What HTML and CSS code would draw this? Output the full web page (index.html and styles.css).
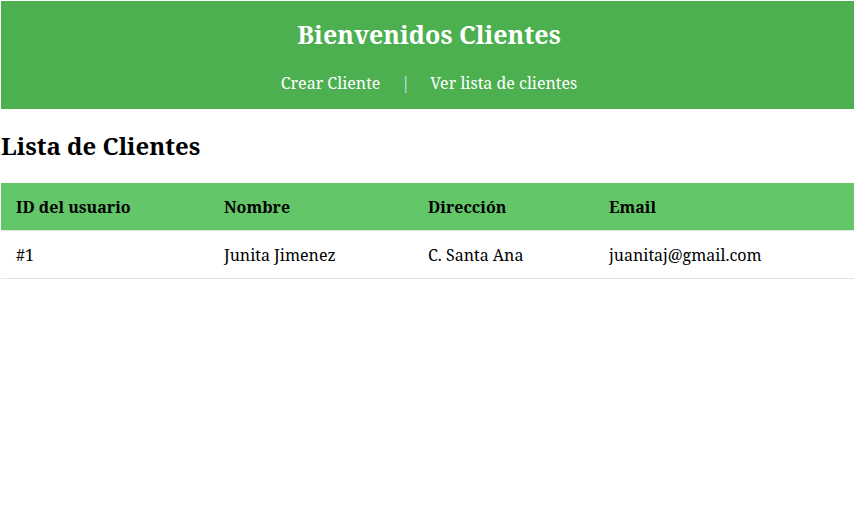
FILE: index.html
```html
<!DOCTYPE html>
<html lang="es">
<head>
<meta charset="utf-8">
<title>Clientes</title>
<link rel="stylesheet" href="styles.css">
</head>
<body>
<header class="site-header">
  <h1 class="site-title">Bienvenidos Clientes</h1>
  <nav class="site-nav">
    <a href="#" class="nav-link">Crear Cliente</a>
    <span class="nav-sep">|</span>
    <a href="#" class="nav-link">Ver lista de clientes</a>
  </nav>
</header>
<main>
  <h2 class="page-title">Lista de Clientes</h2>
  <table class="clients">
    <colgroup>
      <col class="col-id">
      <col class="col-name">
      <col class="col-addr">
      <col class="col-email">
    </colgroup>
    <thead>
      <tr>
        <th>ID del usuario</th>
        <th>Nombre</th>
        <th>Dirección</th>
        <th>Email</th>
      </tr>
    </thead>
    <tbody>
      <tr>
        <td>#1</td>
        <td>Junita Jimenez</td>
        <td>C. Santa Ana</td>
        <td>juanitaj@gmail.com</td>
      </tr>
    </tbody>
  </table>
</main>
</body>
</html>
```
FILE: styles.css
```css
body {
  margin: 1px 0 0 1px;
  font-family: "Noto Serif", "DejaVu Serif", serif;
  color: #000;
  background: #fff;
}
.site-header {
  background: #4caf50;
  color: #fff;
  text-align: center;
  height: 108px;
  display: flex;
  flex-direction: column;
  align-items: center;
}
.site-title {
  margin: 17px 0 0;
  padding-left: 3px;
  font-size: 25px;
  line-height: 32px;
  font-weight: bold;
}
.site-nav {
  margin-top: 22px;
  padding-left: 3px;
  display: flex;
  gap: 20px;
  font-size: 16px;
  line-height: 22px;
}
.nav-link {
  color: #fff;
  text-decoration: none;
}
.nav-sep {
  margin-left: 1px;
  color: #cfe8ff;
}
.page-title {
  margin: 22px 0 22px;
  font-size: 24px;
  line-height: 30px;
  font-weight: bold;
}
.clients {
  width: 100%;
  border-collapse: collapse;
}
.col-id { width: 208px; }
.col-name { width: 204px; }
.col-addr { width: 181px; }
.clients th,
.clients td {
  text-align: left;
  padding: 13px 15px 11px;
  font-size: 16px;
  line-height: 23px;
  border-bottom: 1px solid #e3e3e3;
}
.clients th {
  background: #63c76a;
  font-weight: bold;
}
```
